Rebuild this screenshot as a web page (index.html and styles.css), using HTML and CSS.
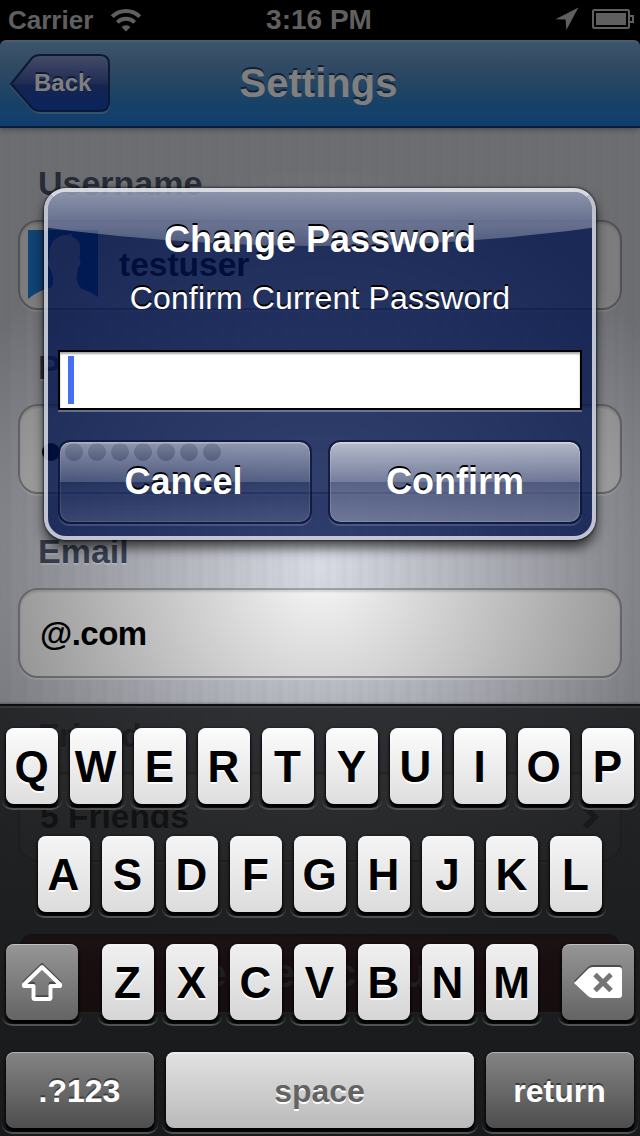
FILE: index.html
```html
<!DOCTYPE html>
<html lang="en">
<head>
<meta charset="utf-8">
<title>Settings</title>
<link rel="stylesheet" href="styles.css">
</head>
<body>
<div class="screen">
  <div class="app">
    <header class="status">
      <div class="status-left">
        <span class="carrier">Carrier</span>
        <svg class="wifi" width="32" height="24" viewBox="0 0 32 24">
          <path d="M2.2 8.700A19.500 19.500 0 0 1 29.800 8.700" fill="none" stroke="#bfbfbf" stroke-width="4"/>
          <path d="M7.300 14.300A12.400 12.400 0 0 1 24.700 14.300" fill="none" stroke="#bfbfbf" stroke-width="3.800"/>
          <path d="M16 23.400L11.600 19A6.200 6.200 0 0 1 20.400 19Z" fill="#bfbfbf"/>
        </svg>
      </div>
      <span class="time">3:16 PM</span>
      <div class="status-right">
        <svg width="24" height="24" viewBox="0 0 24 24"><path d="M23.4.5L11.4 23L10.6 12.6L.6 12.2Z" fill="#bfbfbf"/></svg>
        <svg width="43" height="20" viewBox="0 0 43 20">
          <rect x="1" y="1" width="36" height="18" rx="1.5" fill="none" stroke="#bfbfbf" stroke-width="2"/>
          <rect x="4" y="4" width="30" height="12" fill="#bfbfbf"/>
          <path d="M38 7H41V13H38" fill="none" stroke="#bfbfbf" stroke-width="2"/>
        </svg>
      </div>
    </header>
    <nav class="nav">
      <div class="back">
        <svg class="back-shape" width="102" height="62" viewBox="0 0 102 62">
          <defs><linearGradient id="bk" x1="0" y1="0" x2="0" y2="1">
            <stop offset="0" stop-color="#8a98d0"/><stop offset=".5" stop-color="#4058a8"/><stop offset=".54" stop-color="#2c48a0"/><stop offset="1" stop-color="#1048c0"/>
          </linearGradient></defs>
          <path d="M1 32L23 5Q26 3 31 3H90Q99 3 99 12V50Q99 59 90 59H31Q26 59 23 56Z" fill="none" stroke="#84b2e0" stroke-opacity=".7" stroke-width="2"/>
          <path d="M1 30L22 4Q25 1 31 1H90Q99 1 99 10V48Q99 57 90 57H31Q25 57 22 54Z" fill="url(#bk)" stroke="#163464" stroke-width="2"/>
        </svg>
        <span class="back-label">Back</span>
      </div>
      <h1 class="title">Settings</h1>
    </nav>
    <main class="content">
      <h2 class="label">Username</h2>
      <div class="cell cell-user">
        <svg width="70" height="70" viewBox="0 0 70 70">
          <defs><linearGradient id="av"><stop offset="0" stop-color="#2488ec"/><stop offset="1" stop-color="#1265d0"/></linearGradient></defs>
          <path d="M0 0H70V67Q61 61 54 59Q50 56 48.500 48L50 38Q54 33 51.500 28Q53 14 50.500 11.500Q48 8 44.500 7L43 3.500Q41 5 36 5Q24 8 22 18Q21 22 21.500 28Q18 33 22 38L25 47Q26 56 22 58Q9 61 0 69Z" fill="url(#av)"/>
        </svg>
        <span>testuser</span>
      </div>
      <h2 class="label">Password</h2>
      <div class="cell cell-dots"><i></i><i></i><i></i><i></i><i></i><i></i><i></i><i></i></div>
      <h2 class="label">Email</h2>
      <div class="cell"><span class="email">@.com</span></div>
      <h2 class="label">Friends</h2>
      <div class="cell cell-link">
        <span>5 Friends</span>
        <svg width="18" height="26" viewBox="0 0 18 26"><path d="M3 3L13 13L3 23" fill="none" stroke="#555" stroke-width="6"/></svg>
      </div>
      <div class="delete">Delete Account</div>
    </main>
  </div>

  <div class="dim"></div>

  <section class="alert">
    <div class="gloss"></div>
    <h3 class="alert-title">Change Password</h3>
    <p class="alert-text">Confirm Current Password</p>
    <div class="field"><div class="caret"></div></div>
    <div class="buttons">
      <div class="btn btn-cancel">Cancel</div>
      <div class="btn btn-confirm">Confirm</div>
    </div>
  </section>

  <section class="keyboard">
    <div class="row row-1">
      <div class="key">Q</div><div class="key">W</div><div class="key">E</div><div class="key">R</div><div class="key">T</div><div class="key">Y</div><div class="key">U</div><div class="key">I</div><div class="key">O</div><div class="key">P</div>
    </div>
    <div class="row row-2">
      <div class="key">A</div><div class="key">S</div><div class="key">D</div><div class="key">F</div><div class="key">G</div><div class="key">H</div><div class="key">J</div><div class="key">K</div><div class="key">L</div>
    </div>
    <div class="row row-3">
      <div class="key key-dark key-side">
        <svg width="42" height="40" viewBox="0 0 42 40">
          <path d="M21 4L38.5 21V22.5H29.5V34.5Q29.5 36 28 36H14Q12.500 36 12.500 34.500V22.500H3.500V21Z" transform="translate(0 -2)" fill="none" stroke="#484848" stroke-width="3.600" stroke-linejoin="round"/>
          <path d="M21 4L39 21.500V23H29.500V34.500Q29.500 36 28 36H14Q12.500 36 12.500 34.500V23H3V21.500Z" fill="none" stroke="#fff" stroke-width="4" stroke-linejoin="round"/>
        </svg>
      </div>
      <div class="letters">
        <div class="key">Z</div><div class="key">X</div><div class="key">C</div><div class="key">V</div><div class="key">B</div><div class="key">N</div><div class="key">M</div>
      </div>
      <div class="key key-dark key-side">
        <svg width="50" height="36" viewBox="0 0 50 36">
          <path d="M1 16L15 2Q17 0 20 0H46Q49 0 49 3V28Q49 31 46 31H20Q17 31 15 29Z" fill="#4c4c4c"/>
          <path d="M1 18L15 4Q17 2 20 2H46Q49 2 49 5V30Q49 33 46 33H20Q17 33 15 31Z" fill="#fff"/>
          <path d="M22 9.500L38 25.500M38 9.500L22 25.500" stroke="#747474" stroke-width="5"/>
        </svg>
      </div>
    </div>
    <div class="row row-4">
      <div class="key key-dark key-fn">.?123</div>
      <div class="key key-space">space</div>
      <div class="key key-dark key-fn">return</div>
    </div>
  </section>
</div>
</body>
</html>
```
FILE: styles.css
```css
* { box-sizing: border-box; }

body {
  margin: 0;
  background: #000;
  font-family: "Liberation Sans", Arial, Helvetica, sans-serif;
  font-weight: bold;
}

h1, h2, h3, p { margin: 0; }
svg { display: block; flex: none; }

.screen {
  position: relative;
  width: 640px;
  height: 1136px;
  overflow: hidden;
}

.app {
  display: flex;
  flex-direction: column;
  height: 1136px;
  background: #000;
  isolation: isolate;
}

/* Status bar */
.status {
  display: grid;
  grid-template-columns: 1fr auto 1fr;
  align-items: center;
  height: 40px;
  padding: 0 5px 0 8px;
  color: #bfbfbf;
}
.status-left { display: flex; align-items: center; gap: 17px; }
.carrier { font-size: 26px; }
.wifi { margin-top: -1px; }
.time { padding-right: 5px; font-size: 28px; line-height: 40px; }
.status-right { display: flex; justify-content: flex-end; align-items: center; gap: 13px; padding-bottom: 2px; }

/* Navigation bar */
.nav {
  position: relative;
  z-index: 1;
  display: grid;
  grid-template-columns: 110px 1fr 110px;
  align-items: center;
  height: 88px;
  border-top: 2px solid #93b8dd;
  border-bottom: 2px solid #123c68;
  border-radius: 6px 6px 0 0;
  background: linear-gradient(#7aaad6, #5c90c4 35%, #3084ca 70%, #207ce0);
  box-shadow: 0 2px 5px rgba(0, 0, 0, .3);
}
.back {
  display: grid;
  align-items: center;
  width: 102px;
  margin: 2px 0 0 10px;
}
.back-shape, .back-label { grid-area: 1 / 1; }
.back-label {
  padding: 0 0 4px 24px;
  color: #fff;
  font-size: 24px;
  line-height: 30px;
  text-shadow: 0 -2px 0 #1c3670;
}
.title {
  padding: 0 3px 3px 0;
  color: #fff;
  font-size: 40px;
  line-height: 50px;
  text-align: center;
  text-shadow: 0 -2px 0 #1b416e;
}

/* Settings form */
.content {
  flex: 1;
  padding: 34px 18px 0;
  background: repeating-linear-gradient(90deg, #d8dae3 0 6px, #d4d8e1 6px 11px, #dadce5 11px 16px);
}
.label {
  height: 42px;
  margin-bottom: 16px;
  padding-left: 20px;
  color: #4d576f;
  font-size: 34px;
  line-height: 42px;
  text-shadow: 0 2px 0 rgba(255, 255, 255, .6);
}
.cell {
  display: flex;
  align-items: center;
  height: 90px;
  margin-bottom: 36px;
  padding: 0 20px;
  border: 2px solid #a1a4ad;
  border-radius: 20px;
  background: #f8f8f8;
  box-shadow: 0 2px 0 rgba(255, 255, 255, .5), inset 0 2px 2px rgba(0, 0, 0, .12);
  color: #000;
  font-size: 33.5px;
}
.cell-user { gap: 21px; padding: 0 8px; }
.cell-dots { gap: 5px; padding: 6px 22px 0; }
.cell-dots i { width: 18px; height: 18px; border-radius: 50%; background: #000; }
.email { padding-top: 2px; font-size: 33px; letter-spacing: -.5px; }
.cell-link { justify-content: space-between; }
.delete {
  height: 78px;
  margin: 72px 2px 0;
  border-radius: 12px;
  background: linear-gradient(#b83c44, #a00810 40%, #8c0008);
  box-shadow: inset 0 3px 4px rgba(0, 0, 0, .6), 0 2px 0 #fff;
  color: #fff;
  font-size: 40px;
  line-height: 78px;
  text-align: center;
}

.dim {
  position: absolute;
  inset: 0;
  background: radial-gradient(circle 400px at 320px 568px, rgba(0, 0, 0, 0), rgba(0, 0, 0, .5));
}

/* Alert */
.alert {
  position: absolute;
  left: 44px;
  top: 188px;
  width: 552px;
  height: 352px;
  padding: 28px 10px 0;
  border: 4px solid rgba(255, 255, 255, .72);
  border-top-color: rgba(255, 255, 255, .83);
  border-radius: 22px;
  background: rgba(0, 18, 76, .78);
  box-shadow: 0 8px 12px rgba(0, 0, 0, .65), 0 0 2px 1px rgba(0, 0, 0, .5);
  color: #fff;
  text-align: center;
}
.gloss {
  position: absolute;
  inset: 0 0 auto;
  height: 54px;
  border-radius: 18px 18px 0 0;
  background: linear-gradient(rgba(255, 255, 255, .5), rgba(255, 255, 255, .22));
  clip-path: circle(2055px at 50% -2001px);
}
.alert-title {
  position: relative;
  font-size: 36px;
  line-height: 40px;
  text-shadow: 0 -2px 0 #000;
}
.alert-text {
  margin-top: 19px;
  font-size: 32px;
  font-weight: normal;
  line-height: 38px;
  letter-spacing: .15px;
  text-shadow: 0 -2px 0 #000;
}
.field {
  height: 60px;
  margin-top: 33px;
  padding: 4px 8px;
  border: 2px solid #000;
  background: #fff;
  box-shadow: 0 2px 0 rgba(255, 255, 255, .3), inset 0 2px 2px rgba(0, 0, 0, .35);
}
.caret { width: 6px; height: 48px; background: #466ef5; }
.buttons {
  display: grid;
  grid-template-columns: 1fr 1fr;
  gap: 16px;
  margin-top: 30px;
}
.btn {
  height: 84px;
  border: 2px solid rgba(8, 16, 48, .7);
  border-radius: 12px;
  background-clip: padding-box;
  font-size: 36px;
  line-height: 80px;
  text-shadow: 0 -2px 0 #000;
}
.btn-cancel {
  padding-right: 3px;
  background-image: linear-gradient(rgba(255, 255, 255, .48), rgba(255, 255, 255, .17) 50%, rgba(255, 255, 255, 0) 50%, rgba(255, 255, 255, .12));
  box-shadow: 0 2px 0 rgba(255, 255, 255, .15), inset 0 2px 0 rgba(255, 255, 255, .2), inset 0 0 0 1px rgba(255, 255, 255, .1);
}
.btn-confirm {
  background-image: linear-gradient(rgba(255, 255, 255, .66), rgba(255, 255, 255, .33) 50%, rgba(255, 255, 255, .19) 50%, rgba(255, 255, 255, .31));
  box-shadow: 0 2px 0 rgba(255, 255, 255, .15), inset 0 2px 0 rgba(255, 255, 255, .3), inset 0 0 0 1px rgba(255, 255, 255, .15);
}

/* Keyboard */
.keyboard {
  position: absolute;
  left: 0;
  top: 704px;
  display: flex;
  flex-direction: column;
  gap: 32px;
  width: 640px;
  height: 432px;
  padding: 22px 6px 0;
  border-top: 2px solid #0c0d0e;
  background: linear-gradient(rgba(24, 25, 27, .85), rgba(15, 16, 17, .86) 60%, rgba(12, 13, 14, .87));
  box-shadow: inset 0 2px 0 rgba(255, 255, 255, .08), 0 -1px 2px rgba(0, 0, 0, .3);
}
.row { display: flex; gap: 12px; }
.row-2 { padding: 0 32px; }
.row-3 { justify-content: space-between; }
.letters { display: flex; gap: 12px; }
.key {
  position: relative;
  display: flex;
  align-items: center;
  justify-content: center;
  width: 52px;
  height: 76px;
  border-radius: 8px;
  background: linear-gradient(#fcfcfc, #dedede);
  box-shadow: 0 4px 2px #000, 0 1px 3px 1px rgba(0, 0, 0, .6), inset 0 2px 0 rgba(255, 255, 255, .4);
  color: #000;
  font-size: 44px;
  line-height: 76px;
  padding: 1px 1px 0 0;
  text-shadow: 0 2px 0 #fff;
}
.key::after {
  content: "";
  position: absolute;
  inset: auto -4px -6px;
  height: 18px;
  border-bottom: 2px solid #505152;
  border-radius: 12px;
}
.row-2 .key { background: linear-gradient(#f5f5f5, #dcdcdc); }
.row-3 .key { background: linear-gradient(#f0f0f0, #d6d6d6); }
.row-3 .key-side { width: 72px; background: linear-gradient(#969696, #646464); }
.row-4 .key { font-size: 32px; }
.key-fn { width: 148px; }
.row-4 .key-dark { background: linear-gradient(#848484, #4e4e4e); }
.key-dark {
  color: #fff;
  text-shadow: 0 -2px 0 #3c3c3c;
  box-shadow: 0 4px 2px #000, 0 1px 3px 1px rgba(0, 0, 0, .6), inset 0 1px 0 rgba(255, 255, 255, .4);
}
.row-4 .key-space { width: 308px; background: linear-gradient(#e2e2e2, #bababa); color: #636363; }
```
